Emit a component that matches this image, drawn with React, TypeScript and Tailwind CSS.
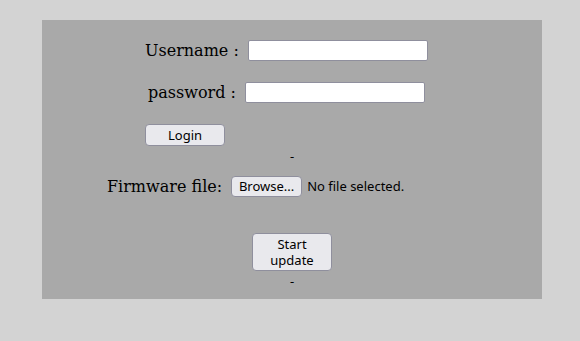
export default function App() {
  const serif = { fontFamily: '"DejaVu Serif", serif' };
  const sans = { fontFamily: '"Noto Sans", sans-serif' };
  return (
    <div className="w-[580px] h-[341px] bg-[#d3d3d3] pt-5" style={sans}>
      <div className="ml-[42px] w-[500px] h-[279px] bg-[#a9a9a9] pt-5 text-[13px] text-black">
        {/* Username */}
        <div className="flex items-center pl-[103px] h-[21px]">
          <span className="text-[16px] leading-none" style={serif}>
            Username :
          </span>
          <input className="ml-[9px] w-[180px] h-[21px] bg-white border border-[#8f8f9d] rounded-[2px]" />
        </div>

        {/* Password */}
        <div className="flex items-center pl-[106px] h-[21px] mt-[21px]">
          <span className="text-[16px] leading-none" style={serif}>
            password :
          </span>
          <input
            type="password"
            className="ml-[9px] w-[180px] h-[21px] bg-white border border-[#8f8f9d] rounded-[2px]"
          />
        </div>

        {/* Login */}
        <div className="pl-[103px] mt-[21px]">
          <button className="w-[80px] h-[22px] bg-[#e9e9ed] border border-[#8f8f9d] rounded-[4px] leading-none">
            Login
          </button>
        </div>
        <div className="text-center leading-[16px] h-[16px] mt-[2px]">-</div>

        {/* Firmware */}
        <div className="flex items-center pl-[65px] mt-[12px] h-[21px]">
          <span className="text-[16px] leading-none" style={serif}>
            Firmware file:
          </span>
          <button className="ml-[9px] h-[21px] w-[71px] bg-[#e9e9ed] border border-[#8f8f9d] rounded-[4px] leading-none">
            Browse...
          </button>
          <span className="ml-[5px]">No file selected.</span>
        </div>

        {/* Start update */}
        <div className="flex justify-center mt-[36px]">
          <button className="w-[80px] h-[38px] bg-[#e9e9ed] border border-[#8f8f9d] rounded-[4px] flex flex-col items-center justify-center">
            <span className="block leading-[16px]">Start</span>
            <span className="block leading-[16px]">update</span>
          </button>
        </div>
        <div className="text-center leading-[16px] h-[16px] mt-[2px]">-</div>
      </div>
    </div>
  );
}
